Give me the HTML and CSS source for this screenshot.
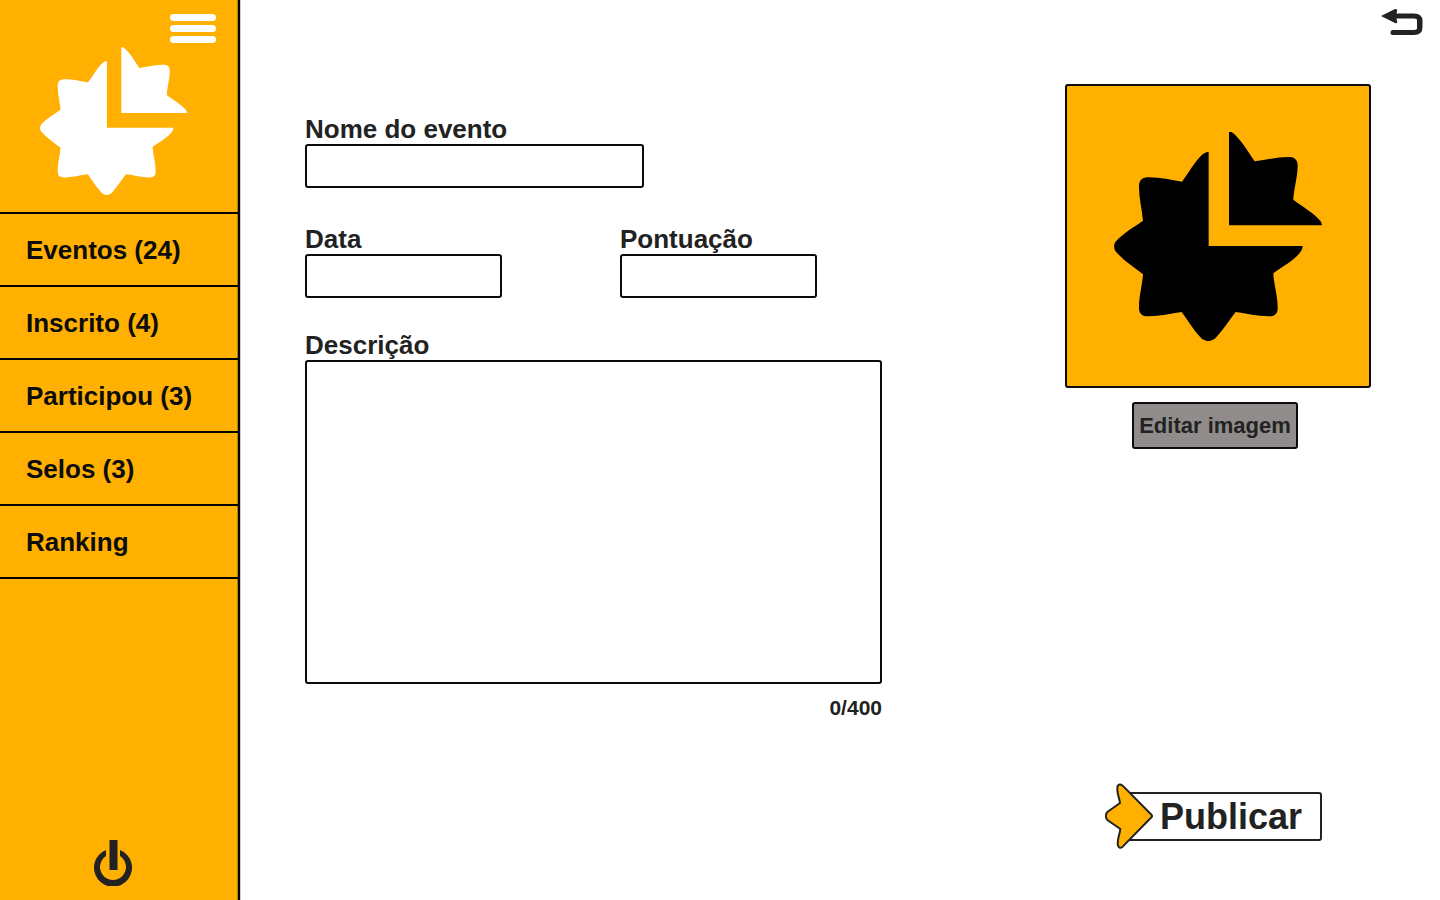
FILE: index.html
```html
<!DOCTYPE html>
<html lang="pt-BR">
<head>
<meta charset="utf-8">
<meta name="viewport" content="width=device-width, initial-scale=1">
<title>Novo evento</title>
<link rel="stylesheet" href="styles.css">
</head>
<body>
<svg class="defs" aria-hidden="true">
  <symbol id="logo" viewBox="162 156 624 627">
    <path d="M446 216V498H728C729 514 706 535 682 551C664 563 650 572 640 580C641 612 654 648 653 688C652 701 644 709 630 709C595 710 562 700 527 696C507 721 490 750 466 775C453 786 437 786 424 775C400 750 384 722 365 696C331 700 297 710 262 709C246 708 238 701 237 686C236 650 247 616 249 583C222 561 190 542 166 513C161 505 161 494 166 486C189 459 221 442 249 422C246 387 236 352 237 316C238 301 247 293 262 292C297 291 333 300 366 305C386 280 403 245 428 223C434 218 440 215 446 216Z"/>
    <path d="M507 156H515C543 177 563 214 584 244C619 240 654 230 690 231C705 232 713 241 713 256C713 291 702 325 700 359C728 381 762 398 783 425L786 436H507Z"/>
  </symbol>
</svg>
<div class="app">
  <aside class="sidebar">
    <div class="brand">
      <button class="menu" type="button" aria-label="Menu"><span></span><span></span><span></span></button>
      <svg class="brand-logo" role="img" aria-label="Logotipo"><use href="#logo"/></svg>
    </div>
    <nav class="nav">
      <a href="#eventos">Eventos (24)</a>
      <a href="#inscrito">Inscrito (4)</a>
      <a href="#participou">Participou (3)</a>
      <a href="#selos">Selos (3)</a>
      <a href="#ranking">Ranking</a>
    </nav>
    <button class="power" type="button" aria-label="Sair">
      <svg viewBox="0 0 38 46"><path d="M12 10V16A13 13 0 1 0 26 16V10A19 19 0 1 1 12 10Z" fill="#222"/><path d="M15.500 0h8v30h-8z" fill="#222"/></svg>
    </button>
  </aside>

  <main class="main">
    <header class="topbar">
      <button class="back" type="button" aria-label="Voltar">
        <svg viewBox="0 0 42 26"><path d="M12 7H33Q39 7 39 12V18Q39 23.500 33 23.500H12" fill="none" stroke="#222" stroke-width="5" stroke-linecap="round" stroke-linejoin="round"/><path d="M36 6Q41 7 41 13V18Q41 23 36 24.500Z" fill="#222"/><path d="M0 7L14 0Q17 0 16 2L15 7L16 12Q17 15 14 14Z" fill="#222"/></svg>
      </button>
    </header>
    <form class="content">
      <div class="fields">
        <div class="field name">
          <label for="nome">Nome do evento</label>
          <input id="nome" type="text">
        </div>
        <div class="row">
          <div class="field">
            <label for="data">Data</label>
            <input id="data" type="text">
          </div>
          <div class="field">
            <label for="pontos">Pontuação</label>
            <input id="pontos" type="text">
          </div>
        </div>
        <div class="field">
          <label for="descricao">Descrição</label>
          <textarea id="descricao" maxlength="400"></textarea>
        </div>
        <output class="counter" for="descricao">0/400</output>
      </div>
      <div class="side">
        <div class="picture"><svg role="img" aria-label="Imagem do evento"><use href="#logo"/></svg></div>
        <button class="edit" type="button">Editar imagem</button>
        <button class="publish" type="submit">
          <svg class="arrow" viewBox="45 40 144 198" aria-hidden="true"><path d="M98 48L185 136Q187 139 185 142L98 231Q88 239 84 228C80 212 89 196 91 178L52 151Q43 139 52 127L90 100C88 83 78 66 83 49Q88 40 98 48Z" fill="#ffb000" stroke="#222" stroke-width="6" stroke-linejoin="round"/></svg>
          Publicar
        </button>
      </div>
    </form>
  </main>
</div>
</body>
</html>
```

FILE: styles.css
```css
* {
  box-sizing: border-box;
}

body {
  margin: 0;
  background: #fff;
  color: #222;
  font-family: "Liberation Sans", Arial, sans-serif;
  font-weight: 700;
}

button {
  padding: 0;
  border: 0;
  background: none;
  color: inherit;
  font: inherit;
  cursor: pointer;
}

svg {
  display: block;
}

.defs {
  display: none;
}

.app {
  display: grid;
  grid-template-columns: 240px 1fr;
  min-height: 100vh;
}

/* Sidebar */
.sidebar {
  display: flex;
  flex-direction: column;
  background: #ffb000;
  border-right: 2px solid #000;
  box-shadow: 1px 0 #ccc, inset -1px 0 #b87f00;
}

.brand {
  display: flex;
  flex-direction: column;
  gap: 4px;
  padding: 14px 22px 17px 40px;
}

.menu {
  display: flex;
  flex-direction: column;
  gap: 4px;
  width: 46px;
  align-self: flex-end;
}

.menu span {
  height: 7px;
  border-radius: 4px;
  background: #fff;
}

.brand-logo {
  width: 147px;
  height: 148px;
  fill: #fff;
}

.nav {
  border-top: 2px solid #000;
}

.nav a {
  display: flex;
  align-items: center;
  height: 73px;
  padding: 2px 26px 0;
  border-bottom: 2px solid #000;
  color: #0c0c0c;
  font-size: 26px;
  text-decoration: none;
}

.power {
  width: 38px;
  margin: auto 0 14px 94px;
}

/* Main area */
.main {
  display: flex;
  flex-direction: column;
}

.topbar {
  display: flex;
  justify-content: flex-end;
  height: 50px;
  padding: 9px 17px;
}

.back {
  width: 42px;
  height: 26px;
}

.content {
  display: flex;
  flex: 1;
  justify-content: space-between;
  gap: 48px;
  padding: 34px 69px 59px 65px;
}

.fields {
  flex: 0 1 577px;
  padding-top: 30px;
}

.field {
  display: flex;
  flex-direction: column;
}

.field label {
  font-size: 26px;
  line-height: 30px;
}

.field input,
.field textarea {
  width: 100%;
  padding: 4px 8px;
  border: 2px solid #0c0c0c;
  border-radius: 3px;
  background: #fff;
  color: inherit;
  font: inherit;
  font-size: 20px;
}

.field input {
  height: 44px;
}

.field textarea {
  height: 324px;
  resize: none;
}

.name {
  max-width: 339px;
}

.row {
  display: grid;
  grid-template-columns: 197px 197px;
  gap: 118px;
  margin: 36px 0 32px;
}

.counter {
  display: block;
  margin-top: 12px;
  font-size: 21px;
  line-height: 24px;
  text-align: right;
}

/* Picture and actions */
.side {
  display: flex;
  flex-direction: column;
  align-items: center;
  width: 306px;
}

.picture {
  display: grid;
  place-items: center;
  width: 100%;
  height: 304px;
  border: 2px solid #0c0c0c;
  border-radius: 3px;
  background: #ffb000;
}

.picture svg {
  width: 208px;
  height: 209px;
}

.edit {
  height: 47px;
  margin: 14px 6px 0 0;
  padding: 0 5px;
  border: 2px solid #0c0c0c;
  border-radius: 3px;
  background: #918c8c;
  font-size: 22px;
}

.publish {
  position: relative;
  height: 49px;
  margin: auto 0 0 8px;
  padding: 0 18px 0 36px;
  border: 2px solid #222;
  border-radius: 3px;
  background: #fff;
  font-size: 36px;
  line-height: 45px;
}

.arrow {
  position: absolute;
  top: -11px;
  left: -19px;
  width: 48px;
  height: 66px;
}
```
